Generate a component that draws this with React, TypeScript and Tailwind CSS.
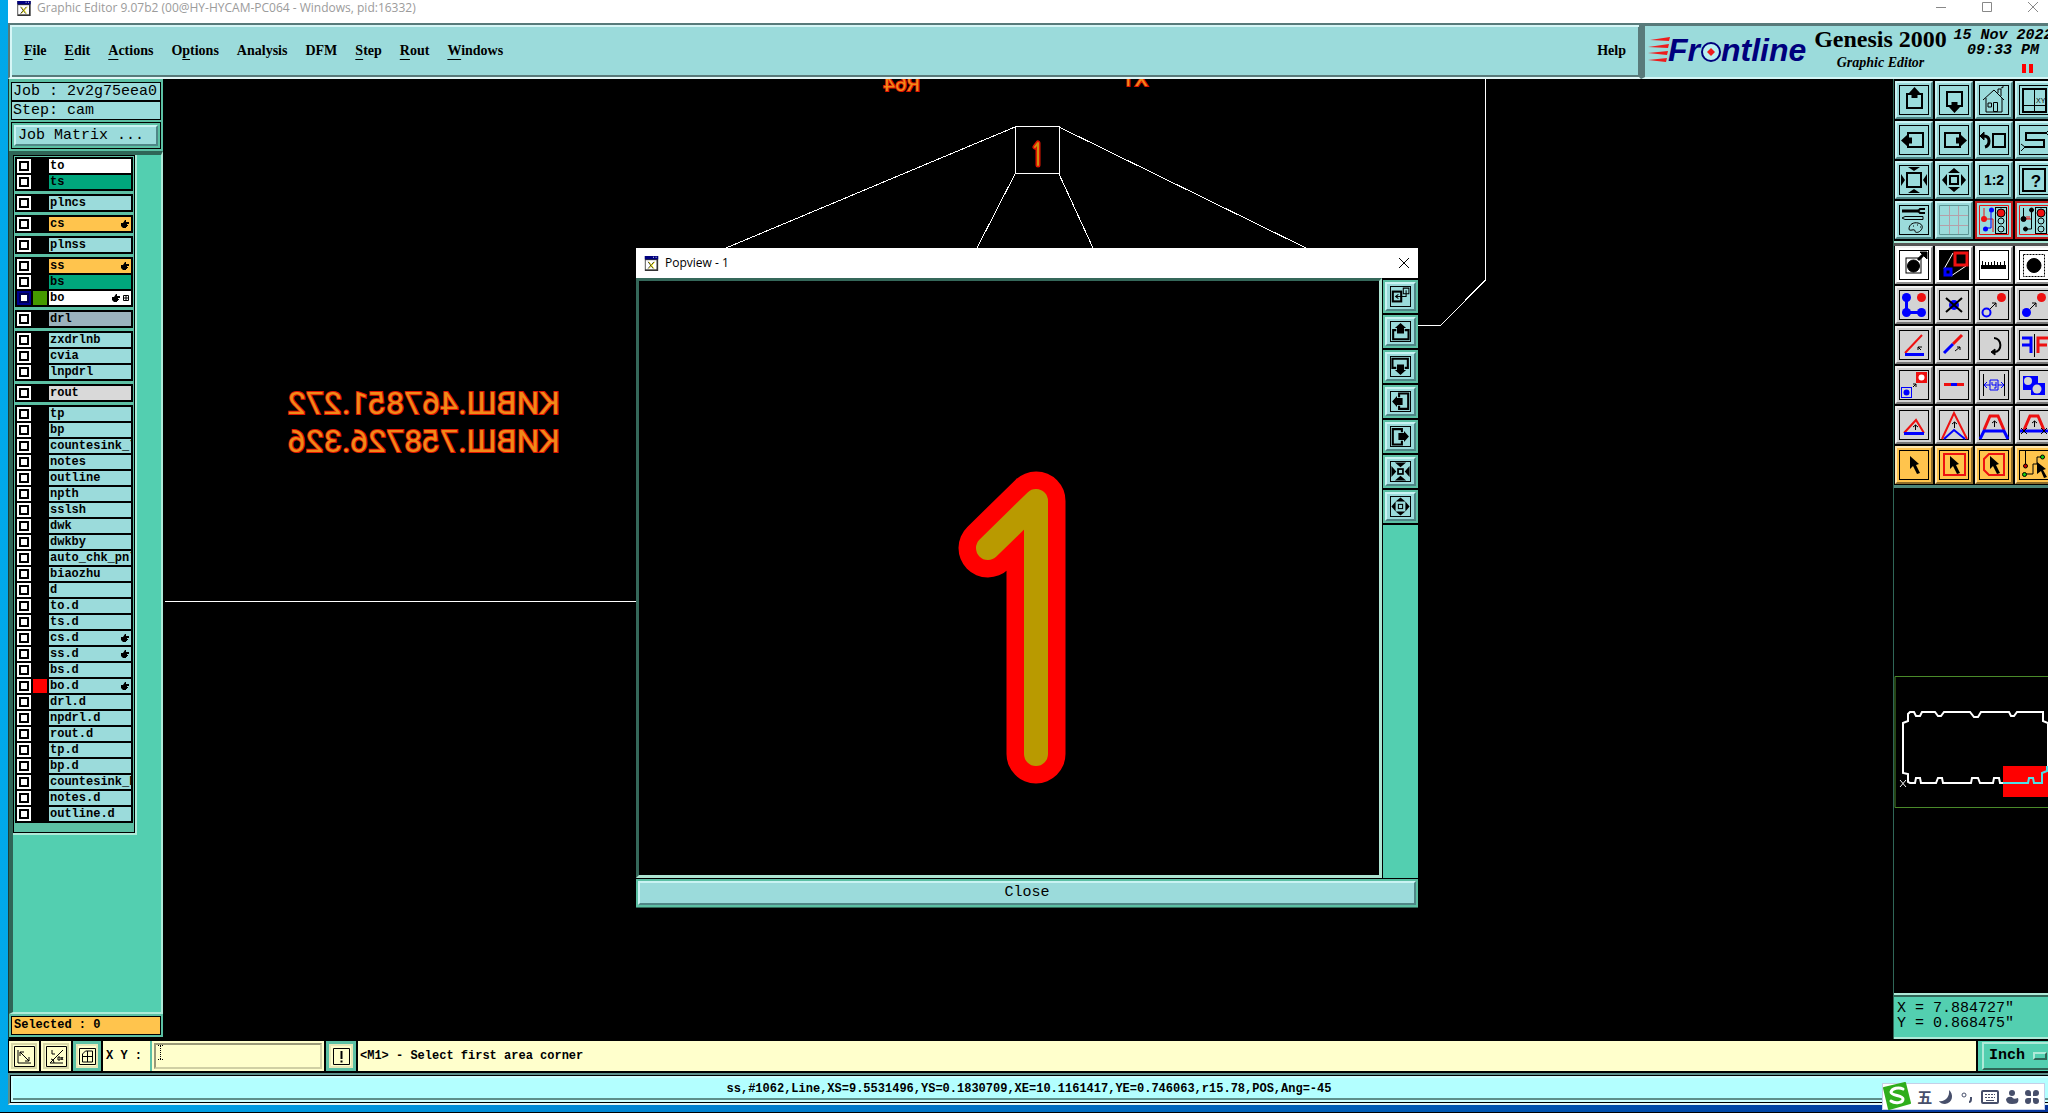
import type { ReactNode } from "react";

type Layer = {
  name: string;
  tone?: "white" | "green" | "orange" | "slate" | "gray";
  hand?: boolean;
  grid?: boolean;
  swatch?: "green" | "red";
  active?: boolean;
};

const layerGroups: Layer[][] = [
  [{ name: "to", tone: "white" }, { name: "ts", tone: "green" }],
  [{ name: "plncs" }],
  [{ name: "cs", tone: "orange", hand: true }],
  [{ name: "plnss" }],
  [
    { name: "ss", tone: "orange", hand: true },
    { name: "bs", tone: "green" },
    { name: "bo", tone: "white", hand: true, grid: true, swatch: "green", active: true },
  ],
  [{ name: "drl", tone: "slate" }],
  [{ name: "zxdrlnb" }, { name: "cvia" }, { name: "lnpdrl" }],
  [{ name: "rout", tone: "gray" }],
  [
    { name: "tp" },
    { name: "bp" },
    { name: "countesink_l" },
    { name: "notes" },
    { name: "outline" },
    { name: "npth" },
    { name: "sslsh" },
    { name: "dwk" },
    { name: "dwkby" },
    { name: "auto_chk_pnl" },
    { name: "biaozhu" },
    { name: "d" },
    { name: "to.d" },
    { name: "ts.d" },
    { name: "cs.d", hand: true },
    { name: "ss.d", hand: true },
    { name: "bs.d" },
    { name: "bo.d", hand: true, swatch: "red" },
    { name: "drl.d" },
    { name: "npdrl.d" },
    { name: "rout.d" },
    { name: "tp.d" },
    { name: "bp.d" },
    { name: "countesink_b" },
    { name: "notes.d" },
    { name: "outline.d" },
  ],
];

const layerTones = {
  white: "bg-white",
  green: "bg-[#00a67c]",
  orange: "bg-[#ffc44d]",
  slate: "bg-[#9bb3bd]",
  gray: "bg-[#d9d9d9]",
};

const swatches = { green: "bg-[#459a00]", red: "bg-[#ff0000]" };

// [before, mnemonic, after]
const menus: [string, string, string][] = [
  ["", "F", "ile"],
  ["", "E", "dit"],
  ["", "A", "ctions"],
  ["O", "p", "tions"],
  ["Analysis", "", ""],
  ["DFM", "", ""],
  ["", "S", "tep"],
  ["", "R", "out"],
  ["", "W", "indows"],
];

const serif = "font-['Liberation_Serif',serif]";
const mono = "font-['Liberation_Mono',monospace]";
const sans = "font-['Open_Sans',sans-serif]";

const bevels = {
  cyan: "bg-[#9bdbdb] border-t-[#c9f3f3] border-l-[#c9f3f3] border-r-[#4f8686] border-b-[#4f8686]",
  white: "bg-white border-t-[#f4f4f4] border-l-[#f4f4f4] border-r-[#8f8f8f] border-b-[#8f8f8f]",
  gray: "bg-[#d3d3d3] border-t-[#f0f0f0] border-l-[#f0f0f0] border-r-[#777777] border-b-[#777777]",
  orange: "bg-[#ffc44d] border-t-[#ffe7b0] border-l-[#ffe7b0] border-r-[#8d6c2a] border-b-[#8d6c2a]",
};

type Tone = keyof typeof bevels;
type Tool = { label: string; icon: ReactNode; tone?: Tone; frame?: "red" | "none" };

const blue = "#0000ff";
const red = "#ee1111";

const panUp = (
  <>
    <rect x="8" y="9" width="15" height="14" fill="none" strokeWidth="2" />
    <path d="M15.500 2 21 8h-2.500v5h-6V8H10z" fill="#000" stroke="none" />
  </>
);
const panDown = (
  <>
    <rect x="8" y="7" width="15" height="14" fill="none" strokeWidth="2" />
    <path d="M15.500 28 21 22h-2.500v-5h-6v5H10z" fill="#000" stroke="none" />
  </>
);
const panLeft = (
  <>
    <rect x="9" y="8" width="15" height="14" fill="none" strokeWidth="2" />
    <path d="M2 15.500 8 10v2.500h5v6H8V21z" fill="#000" stroke="none" />
  </>
);
const panRight = (
  <>
    <rect x="6" y="8" width="15" height="14" fill="none" strokeWidth="2" />
    <path d="M28 15.500 22 10v2.500h-5v6h5V21z" fill="#000" stroke="none" />
  </>
);

const viewTools: Tool[] = [
  { label: "Pan up", icon: panUp },
  { label: "Pan down", icon: panDown },
  {
    label: "Home",
    icon: (
      <>
        <path d="M4 15 15 5l10 10M7 13v14h16V13M19 8V4h3v7M22 3q3 0 2-2" fill="none" />
        <path d="M14.500 17.500h4v9h-4zM9 18h3.500v4H9z" fill="none" />
      </>
    ),
  },
  {
    label: "Zoom to point",
    icon: (
      <>
        <path d="M4 4h23v23H4z" fill="none" strokeWidth="2" />
        <path d="M15.500 4v23M4 20.500h23" />
        <text x="17" y="18" fontSize="7" fill="#000" stroke="none" fontFamily="Liberation Sans, sans-serif">
          XY
        </text>
      </>
    ),
  },
  { label: "Pan left", icon: panLeft },
  { label: "Pan right", icon: panRight },
  {
    label: "Previous view",
    icon: (
      <>
        <rect x="14" y="9" width="12" height="13" fill="none" strokeWidth="2" />
        <path d="M5 11q5 0 5 5t-4 6" fill="none" strokeWidth="3" />
        <path d="M1 11l4-4v8z" fill="#000" />
      </>
    ),
  },
  {
    label: "Serpentine",
    icon: (
      <>
        <path d="M28 8H7v7h18v7H6" fill="none" strokeWidth="2" />
        <path d="M2 19l4 3-4 4M30 5l-3 3 3 3" fill="none" />
      </>
    ),
  },
  {
    label: "Zoom in",
    icon: (
      <>
        <rect x="8" y="8" width="14" height="14" fill="none" strokeWidth="2" />
        <path d="M9 2h12l-6 4zM9 28h12l-6-4zM2 9v12l4-6zM28 9v12l-4-6z" fill="#000" stroke="none" />
      </>
    ),
  },
  {
    label: "Zoom out",
    icon: (
      <>
        <rect x="11" y="11" width="8" height="8" fill="none" strokeWidth="2" />
        <path d="M15 3l6 5H9zM15 27l6-5H9zM3 15l5-6v12zM27 15l-5-6v12z" fill="#000" stroke="none" />
      </>
    ),
  },
  {
    label: "Scale 1:2",
    icon: (
      <text
        x="15"
        y="20"
        textAnchor="middle"
        fontSize="14"
        fontWeight="bold"
        fill="#000"
        stroke="none"
        fontFamily="Liberation Sans, sans-serif"
      >
        1:2
      </text>
    ),
  },
  {
    label: "Help on area",
    icon: (
      <>
        <rect x="4" y="4" width="22" height="22" fill="none" strokeWidth="2" />
        <text
          x="17"
          y="22"
          textAnchor="middle"
          fontSize="17"
          fontWeight="bold"
          fill="#000"
          stroke="none"
          fontFamily="Liberation Sans, sans-serif"
        >
          ?
        </text>
      </>
    ),
  },
  {
    label: "Setup",
    icon: (
      <>
        <path d="M3 6h16" strokeWidth="3" />
        <path d="M26 4h-5l-2 2 2 2h5" fill="none" strokeWidth="2" />
        <path d="M3 13l3-1.500h18v3H6z" fill="none" />
        <path
          d="M10 24c0-5 5-7 9-6 5 1 5 5 3 7-2 3-6 3-6 1 0-3-6 1-6-2zM14 21h1M18 20h1M21 22h1"
          fill="none"
        />
      </>
    ),
  },
  {
    label: "Grid",
    frame: "none",
    icon: (
      <>
        <path d="M10.500 1v28M19.500 1v28M1 10.500h28M1 20.500h28" fill="none" stroke="#b5a0a8" />
        <path d="M.5 .5h29v29H.5z" fill="none" stroke="#5d9494" />
      </>
    ),
  },
  {
    label: "Online netlist",
    frame: "red",
    icon: (
      <>
        <path d="M5 3v11h9v13" fill="none" stroke={red} />
        <path d="M12 4v19H7" fill="none" stroke={blue} />
        <g stroke="none">
          <circle cx="5" cy="14" r="3" fill={red} />
          <circle cx="12.500" cy="5" r="2.500" fill={blue} />
          <circle cx="6.500" cy="24" r="2.500" fill={blue} />
        </g>
        <rect x="16.500" y="2.500" width="11" height="26" fill="none" />
        <circle cx="22" cy="8" r="4" fill={red} />
        <circle cx="22" cy="16" r="3" fill="none" />
        <circle cx="22" cy="24" r="3" fill="none" />
      </>
    ),
  },
  {
    label: "Online check",
    frame: "red",
    icon: (
      <>
        <path d="M4.500 3v11M12.500 5v19H7" fill="none" />
        <path d="M5 14h7M8 11v3M10 11v3" fill="none" stroke={red} />
        <circle cx="4.500" cy="14" r="2.500" fill="#000" />
        <circle cx="12.500" cy="5" r="2" fill="#000" />
        <circle cx="6.500" cy="24" r="2" fill="#000" />
        <rect x="16.500" y="2.500" width="11" height="26" fill="none" />
        <circle cx="22" cy="8" r="4" fill={red} />
        <circle cx="22" cy="16" r="3" fill="none" />
        <circle cx="22" cy="24" r="3" fill="none" />
      </>
    ),
  },
];

const cursor = <path d="M11 6l9 8-3 1 4 8-3 1-4-8-3 3z" fill="#000" stroke="none" />;
const smallArrow = <path d="M11 19l6-6M13 13h4v4" fill="none" />;

const editTools: Tool[] = [
  {
    label: "Reference pad",
    tone: "white",
    icon: (
      <>
        <rect x="7" y="8" width="15" height="15" fill="none" />
        <circle cx="14.500" cy="16" r="6" fill="#000" />
        <path d="M19 10l5-5" strokeWidth="3" />
        <path d="M21 2h7v7z" fill="#000" />
      </>
    ),
  },
  {
    label: "Area magnify",
    tone: "white",
    frame: "none",
    icon: (
      <>
        <path d="M0 0h30v30H0z" fill="#000" stroke="none" />
        <path d="M5 19L14 3M12 26l15-10" stroke="#fff" />
        <rect x="16" y="3" width="12" height="12" fill="none" stroke={red} strokeWidth="3" />
        <rect x="6" y="19" width="6" height="6" fill="none" stroke={blue} strokeWidth="3" />
      </>
    ),
  },
  {
    label: "Measure",
    tone: "white",
    icon: (
      <>
        <path d="M2 15h25v4H2z" fill="#000" stroke="none" />
        <path d="M3.500 11v5M6.500 12v4M9.500 12v4M12.500 12v4M15.500 11v5M18.500 12v4M21.500 12v4M25.500 11v5" />
      </>
    ),
  },
  {
    label: "Select feature",
    tone: "white",
    icon: (
      <>
        <rect x="4.500" y="4.500" width="21" height="22" fill="none" strokeDasharray="2 1" />
        <circle cx="15" cy="15.500" r="7" fill="#000" />
      </>
    ),
  },
  {
    label: "Add feature",
    tone: "gray",
    icon: (
      <>
        <path d="M7.500 8v14.500h15" fill="none" stroke={blue} strokeWidth="3" />
        <g stroke="none">
          <circle cx="7.500" cy="7.500" r="4.500" fill={blue} />
          <circle cx="7.500" cy="22.500" r="4.500" fill={blue} />
          <circle cx="22.500" cy="22.500" r="4.500" fill={blue} />
          <circle cx="22.500" cy="7.500" r="4.500" fill={red} />
        </g>
      </>
    ),
  },
  {
    label: "Delete feature",
    tone: "gray",
    icon: (
      <>
        <circle cx="15" cy="15" r="5" fill={blue} stroke="none" />
        <path d="M7 8l16 14M23 8L7 22" strokeWidth="2" />
      </>
    ),
  },
  {
    label: "Move feature",
    tone: "gray",
    icon: (
      <>
        <circle cx="7.500" cy="22.500" r="4" fill="none" stroke={blue} strokeWidth="2" />
        <circle cx="22.500" cy="7.500" r="4.500" fill={red} stroke="none" />
        {smallArrow}
      </>
    ),
  },
  {
    label: "Copy feature",
    tone: "gray",
    icon: (
      <>
        <circle cx="7.500" cy="22.500" r="4.500" fill={blue} stroke="none" />
        <circle cx="22.500" cy="7.500" r="4.500" fill={red} stroke="none" />
        {smallArrow}
      </>
    ),
  },
  {
    label: "Change angle",
    tone: "gray",
    icon: (
      <>
        <path d="M6 23L23 5" stroke={red} strokeWidth="2" />
        <path d="M6 24.500h19" stroke={blue} strokeWidth="3" />
        <path d="M22 20l-3-3M19 20v-3h4" fill="none" />
      </>
    ),
  },
  {
    label: "Stretch line",
    tone: "gray",
    icon: (
      <>
        <path d="M14 14l9-9" stroke={red} strokeWidth="3" />
        <path d="M5 23l9-9" stroke={blue} strokeWidth="3" />
        <path d="M16 21l5-4M18 17h3v3" fill="none" />
      </>
    ),
  },
  {
    label: "Rotate",
    tone: "gray",
    icon: (
      <>
        <path d="M15 8c8 0 9 14 0 14" fill="none" strokeWidth="2" />
        <path d="M12 22l4-3v6z" fill="#000" />
      </>
    ),
  },
  {
    label: "Mirror",
    tone: "gray",
    icon: (
      <>
        <path d="M3 8h9v15M3 15h9" fill="none" stroke={blue} strokeWidth="3" />
        <path d="M15.500 4v23" />
        <path d="M30 8H19v15M19 15h9" fill="none" stroke={red} strokeWidth="3" />
      </>
    ),
  },
  {
    label: "Resize pad",
    tone: "gray",
    icon: (
      <>
        <rect x="2.500" y="17.500" width="10" height="10" fill="none" stroke={blue} />
        <circle cx="7.500" cy="22.500" r="3" fill={blue} stroke="none" />
        <path d="M17 2h11v11H17z" fill={red} stroke="none" />
        <circle cx="22.500" cy="7.500" r="3" fill="#fff" stroke="none" />
        <path d="M14 17l3-3M14 14h3v3" fill="none" />
      </>
    ),
  },
  {
    label: "Break line",
    tone: "gray",
    icon: (
      <>
        <path d="M5 14.500h20" stroke={red} strokeWidth="3" />
        <path d="M12 14.500h6" stroke={blue} strokeWidth="3" />
      </>
    ),
  },
  {
    label: "Spacing",
    tone: "gray",
    icon: (
      <>
        <path d="M4.500 4v22M25.500 4v22" />
        <path
          d="M6 15h5M19 15h5M8 12l-3 3 3 3M22 12l3 3-3 3M11 10h8v10h-8zM13 12v3h4M17 12v6h-2"
          fill="none"
          stroke={blue}
        />
      </>
    ),
  },
  {
    label: "Merge",
    tone: "gray",
    icon: (
      <>
        <path d="M4 6h15v7h7v12H12v-5H4z" fill={blue} stroke="none" />
        <circle cx="9" cy="11" r="4" fill="#d3d3d3" stroke="none" />
        <circle cx="18" cy="19" r="4.500" fill="#d3d3d3" stroke="none" />
      </>
    ),
  },
  {
    label: "Stretch segment",
    tone: "gray",
    icon: (
      <>
        <path d="M5 23L17 10l8 13" fill="none" stroke={red} strokeWidth="2" />
        <path d="M5 23.500h20" stroke={blue} strokeWidth="3" />
        <path d="M16.500 20v-5M14 17l2.500-2 2.500 2" fill="none" />
      </>
    ),
  },
  {
    label: "Stretch corner",
    tone: "gray",
    icon: (
      <>
        <path d="M3 29L15 3l13 26" fill="none" stroke={red} strokeWidth="2" />
        <path d="M5 29l10-9 11 9" fill="none" stroke={blue} strokeWidth="2" />
        <path d="M15.500 18v-6M13 14l2.500-2 2.500 2" fill="none" />
      </>
    ),
  },
  {
    label: "Parallel move",
    tone: "gray",
    icon: (
      <>
        <path d="M5 20l6-14h8l6 14" fill="none" stroke={red} strokeWidth="3" />
        <path d="M1 29l4-8h20l4 8" fill="none" stroke={blue} strokeWidth="3" />
        <path d="M15.500 17v-6M13 13l2.500-2 2.500 2" fill="none" />
      </>
    ),
  },
  {
    label: "Parallel stretch",
    tone: "gray",
    icon: (
      <>
        <path d="M5 20l6-14h8l6 14" fill="none" stroke={red} strokeWidth="3" />
        <path d="M1 21h28" fill="none" stroke={blue} strokeWidth="3" />
        <path
          d="M15.500 17v-6M13 13l2.500-2 2.500 2M2 18l6 6M8 18l-6 6M22 18l6 6M28 18l-6 6"
          fill="none"
        />
      </>
    ),
  },
  { label: "Select", tone: "orange", icon: cursor },
  {
    label: "Select rectangle",
    tone: "orange",
    icon: (
      <>
        <rect x="5" y="4" width="21" height="21" fill="none" stroke={red} strokeWidth="2" />
        {cursor}
      </>
    ),
  },
  {
    label: "Select polygon",
    tone: "orange",
    icon: (
      <>
        <path d="M10 4h15v21H10l-5-5V9z" fill="none" stroke={red} strokeWidth="2" />
        {cursor}
      </>
    ),
  },
  {
    label: "Select net",
    tone: "orange",
    icon: (
      <>
        <path d="M6.500 1v14M6 24h8V14h4V7h6" fill="none" />
        <circle cx="6.500" cy="16" r="2" fill="#c00" />
        <circle cx="5.500" cy="24.500" r="2" fill="#1c1" />
        <circle cx="23.500" cy="7" r="2" fill="#1c1" />
        <path d="M18 12l9 7-3 1 4 7-3 1-3-7-4 3z" fill="#000" stroke="none" />
      </>
    ),
  },
];

const popPan = (
  <>
    <path d="M9 13H4.500v13h22V13H21" fill="none" strokeWidth="3" />
    <path d="M15 3l8 7h-3v8H10v-8H7z" fill="#000" stroke="none" />
  </>
);

const popTools: Tool[] = [
  {
    label: "Duplicate view",
    icon: (
      <>
        <rect x="4" y="8" width="12" height="14" fill="none" strokeWidth="3" />
        <path d="M19 3h8v8h-8zM8 15h15V6M12 12l-4 3 4 3" fill="none" strokeWidth="1.500" />
      </>
    ),
  },
  { label: "Pan up", icon: popPan },
  { label: "Pan down", icon: <g transform="rotate(180 15 15)">{popPan}</g> },
  { label: "Pan left", icon: <g transform="rotate(-90 15 15)">{popPan}</g> },
  { label: "Pan right", icon: <g transform="rotate(90 15 15)">{popPan}</g> },
  {
    label: "Zoom in",
    icon: (
      <>
        <rect x="11.500" y="11.500" width="7" height="7" fill="none" strokeWidth="2.500" />
        <path d="M7 2h16l-8 7zM7 28h16l-8-7zM2 7v16l7-8zM28 7v16l-7-8z" fill="#000" stroke="none" />
      </>
    ),
  },
  {
    label: "Zoom out",
    icon: (
      <>
        <rect x="12" y="12" width="6" height="6" fill="none" strokeWidth="1.500" />
        <path d="M15 2l7 6H8zM15 28l7-6H8zM2 15l6-7v14zM28 15l-6-7v14z" fill="#000" stroke="none" />
      </>
    ),
  },
];

const ToolButton = ({ label, icon, tone = "cyan", frame }: Tool) => (
  <button
    aria-label={label}
    className={`flex h-[38px] w-[38px] shrink-0 items-center justify-center border-2 ${
      frame === "red" ? "border-[#c11a1a] bg-[#9bdbdb]" : bevels[tone]
    }`}
  >
    <svg viewBox="0 0 30 30" className="size-[30px] shrink-0" stroke="#000">
      {!frame && <rect x=".5" y=".5" width="29" height="29" fill="none" />}
      {frame === "red" && <path d="M.5 .5h29v29H.5z" fill="none" stroke={red} />}
      {icon}
    </svg>
  </button>
);

const XIcon = ({ className }: { className: string }) => (
  <svg viewBox="0 0 16 18" className={className}>
    <path d="M0 0h16v18H0z" fill="#333" />
    <path d="M1 5h13v11H1z" fill="#fff" />
    <path d="M0 0h16v4H0z" fill="#000080" />
    <path d="M10 1h1v1h-1zM13 1h1v1h-1z" fill="#fff" />
    <path d="M4 7l6 8M11 7l-7 8" stroke="#000" />
    <path d="M5 7l6 8M12 7l-7 8" stroke="#e8e000" />
  </svg>
);

const Hand = () => (
  <svg viewBox="0 0 8 8" className="size-2">
    <path d="M0 3h2l2-3h1v2h3v2H6v1h1v1H6v1H5v1H2L0 6z" fill="#000" />
  </svg>
);

const TitleBar = () => (
  <header className="flex h-[23px] items-start bg-white pl-2">
    <div className={`flex flex-1 items-center gap-[5px] text-[12px] leading-[16px] text-[#9b9b9b] ${sans}`}>
      <XIcon className="h-[15px] w-[16px]" />
      Graphic Editor 9.07b2 (00@HY-HYCAM-PC064 - Windows, pid:16332)
    </div>
    <div className="flex gap-[34px] pt-[1px] pr-[9px]">
      <button aria-label="Minimize">
        <svg viewBox="0 0 12 12" className="size-3" stroke="#888">
          <path d="M1 6.500h10" />
        </svg>
      </button>
      <button aria-label="Maximize">
        <svg viewBox="0 0 12 12" className="size-3" stroke="#888" fill="none">
          <path d="M1.500 1.500h9v9h-9z" />
        </svg>
      </button>
      <button aria-label="Close window">
        <svg viewBox="0 0 12 12" className="size-3" stroke="#888">
          <path d="M1 1l10 10M11 1L1 11" />
        </svg>
      </button>
    </div>
  </header>
);

const Logo = () => (
  <svg viewBox="0 0 164 44" className="h-11 w-[164px] shrink-0" role="img" aria-label="Frontline">
    <path d="M2 14l20-3-1 4zM0 21l21-3-1 4zM0 27l20-2-1 4zM0 34l19-2-1 4z" fill="#ee1c1c" />
    <g fontFamily="Liberation Sans, sans-serif" fontSize="32" fontWeight="bold" fontStyle="italic" fill="#00007d">
      <text x="20" y="35">
        Fr
      </text>
      <text x="73" y="35">
        ntline
      </text>
    </g>
    <circle cx="63" cy="26" r="9" fill="#b9f0f0" stroke="#00007d" strokeWidth="2" />
    <path d="M63 22l4 4-4 4-4-4z" fill="#ee1c1c" />
  </svg>
);

const MenuBar = () => (
  <div className="flex h-14 bg-[#9bdbdb]">
    <nav
      className={`flex flex-1 items-center gap-[18px] border-2 border-[#587a7a] border-b-[#e2f7f7] pr-[13px] pb-[2px] pl-[14px] text-[14px] font-bold shadow-[inset_2px_2px_#d6f6f6,inset_-1px_-2px_#587a7a] ${serif}`}
    >
      {menus.map(([before, key, after]) => (
        <button key={before + key + after}>
          {before}
          <span className="underline underline-offset-4">{key}</span>
          {after}
        </button>
      ))}
      <button className="ml-auto">Help</button>
    </nav>
    <div className="flex w-[407px] shrink-0 overflow-hidden border-t-3 border-b-2 border-l-4 border-t-[#587a7a] border-b-[#d6f6f6] border-l-[#587a7a] pl-[3px]">
      <Logo />
      <div className={`flex w-[137px] shrink-0 flex-col items-center font-bold ${serif}`}>
        <span className="text-[24px] leading-[26px] whitespace-nowrap">Genesis 2000</span>
        <span className="text-[14px] leading-[22px] italic">Graphic Editor</span>
      </div>
      <div
        className={`ml-1 flex w-[100px] shrink-0 flex-col items-center pt-[2px] text-[15px] leading-[15px] font-bold italic ${mono}`}
      >
        <span className="whitespace-nowrap">15 Nov 2022</span>
        <span>09:33 PM</span>
        <span className="mt-[6px] flex gap-[3px] self-end pr-[20px]">
          <i className="h-[9px] w-1 bg-[#ff0000]" />
          <i className="h-[9px] w-1 bg-[#ff0000]" />
        </span>
      </div>
    </div>
  </div>
);

const LayerRow = ({ layer }: { layer: Layer }) => (
  <div className="flex h-[14px] gap-[2px]">
    <button
      aria-label={`Display ${layer.name}`}
      className={`flex w-[14px] items-center justify-center ${layer.active ? "bg-[#000090]" : "bg-white"}`}
    >
      <span className={`size-[10px] border-2 bg-white ${layer.active ? "border-[#000050]" : "border-black"}`} />
    </button>
    <span className={`w-[14px] ${layer.swatch ? swatches[layer.swatch] : "bg-black"}`} />
    <button
      className={`flex min-w-0 flex-1 items-center gap-[3px] overflow-hidden pr-[2px] pl-[1px] text-left ${
        layer.tone ? layerTones[layer.tone] : "bg-[#9bdbdb]"
      }`}
    >
      <span className="flex-1 leading-[14px]">{layer.name}</span>
      {layer.hand && <Hand />}
      {layer.grid && (
        <svg viewBox="0 0 6 6" className="size-[6px]" stroke="#000" fill="none">
          <path d="M.5 .5h5v5h-5zM3 0v6M0 3h6" />
        </svg>
      )}
    </button>
  </div>
);

const LayerPanel = () => (
  <aside className={`flex w-[155px] shrink-0 flex-col border-l border-l-[#1f3d36] bg-[#5cc0a4] ${mono}`}>
    <div className="px-[2px] pt-[3px] pb-[2px] text-[15px]">
      <div className="h-[19px] border border-black bg-[#9bdbdb] pl-[1px] leading-[17px] whitespace-nowrap">
        Job : 2v2g75eea0
      </div>
      <div className="h-[19px] border border-black bg-[#9bdbdb] pl-[1px] leading-[17px]">Step: cam</div>
      <div className="mt-[2px] border border-black p-[2px]">
        <button className={`block h-[21px] w-full border-2 pl-[2px] text-left leading-[17px] ${bevels.cyan}`}>
          Job Matrix ...
        </button>
      </div>
    </div>
    <div className="flex flex-1 flex-col items-start border-t-4 border-r-2 border-b-2 border-l-4 border-t-[#2f6657] border-r-[#aeead8] border-b-[#aeead8] border-l-[#2f6657] bg-[#53cfb0] text-[12px] font-bold">
      <div className="border-r-2 border-b-2 border-[#aeead8]">
        <div className="flex w-[122px] flex-col gap-[3px] border border-black bg-[#5cc0a4] px-[1px] pt-[1px] pb-[9px]">
          {layerGroups.map((group) => (
            <div key={group[0].name} className="flex flex-col gap-[2px] bg-black p-[2px]">
              {group.map((layer) => (
                <LayerRow key={layer.name} layer={layer} />
              ))}
            </div>
          ))}
        </div>
      </div>
    </div>
    <div className="border-b-2 border-black">
      <div className="mx-[2px] my-[2px] h-[19px] border border-black bg-[#ffc44d] pl-[2px] text-[12px] leading-[17px] font-bold">
        Selected : 0
      </div>
    </div>
  </aside>
);

const Popview = () => (
  <section
    aria-label="Popview - 1"
    className="absolute top-[169px] left-[473px] flex h-[660px] w-[782px] flex-col border-b border-[#2f6657] bg-black"
  >
    <header className={`flex h-[30px] items-center gap-[6px] bg-white pr-2 pl-2 text-[12px] ${sans}`}>
      <XIcon className="h-[15px] w-[15px]" />
      <span className="flex-1">Popview - 1</span>
      <button aria-label="Close popview">
        <svg viewBox="0 0 12 12" className="size-3" stroke="#000">
          <path d="M1 1l10 10M11 1L1 11" />
        </svg>
      </button>
    </header>
    <div className="flex flex-1 gap-[1px]">
      <div className="relative flex-1 border-[3px] border-t-[#35685a] border-r-[#aee5d3] border-b-[#aee5d3] border-l-[#35685a]">
        <svg className="absolute inset-0 size-full" fill="none" strokeLinecap="round" strokeLinejoin="round">
          <path d="M349 267L397 220V473" stroke="#ff0000" strokeWidth="59" />
          <path d="M349 267L397 220V473" stroke="#b99a00" strokeWidth="24" />
        </svg>
      </div>
      <div className="flex w-[35px] flex-col bg-[#53cfb0]">
        <div className="flex flex-col gap-[2px] bg-black pt-[2px] pb-[2px]">
          {popTools.map((tool) => (
            <div key={tool.label} className="border-2 border-[#5cc0a4] bg-[#5cc0a4]">
              <button
                aria-label={tool.label}
                className={`flex h-[29px] w-full items-center justify-center border-2 ${bevels.cyan}`}
              >
                <svg viewBox="0 0 30 30" className="size-[21px]" stroke="#000">
                  <rect x=".7" y=".7" width="28.600" height="28.600" fill="none" strokeWidth="1.400" />
                  {tool.icon}
                </svg>
              </button>
            </div>
          ))}
        </div>
      </div>
    </div>
    <div className="mt-[1px] border-2 border-[#5cc0a4]">
      <button className={`block h-6 w-full border-2 text-[15px] leading-[20px] ${bevels.cyan} ${mono}`}>Close</button>
    </div>
  </section>
);

const Canvas = () => (
  <main className="relative min-w-0 flex-1 overflow-hidden bg-black">
    <svg className="absolute inset-0 size-full" fill="none" shapeRendering="crispEdges" stroke="#fff">
      <path d="M852.500 47.500h44v47h-44zM852 48L563 169M852 95l-38 74M896 95l34 74M896 48l247 121" />
      <path d="M1322.500 0v201l-45 45.500h-30M2 522.500h480" />
    </svg>
    <svg
      className="absolute inset-0 size-full"
      fontFamily="Roboto, sans-serif"
      fontSize="32"
      fill="#f08a18"
      stroke="#e01400"
      strokeWidth="2"
      paintOrder="stroke"
    >
      <text transform="translate(397 335) scale(-1 1)">КИВШ.467851.272</text>
      <text transform="translate(397 373) scale(-1 1)">КИВШ.758726.326</text>
      <text transform="translate(757 12) scale(-1 1)" fontSize="21">
        R64
      </text>
      <text transform="translate(985 7) scale(-1 1)" fontSize="21">
        X1
      </text>
      <g fill="none" strokeLinecap="round" strokeLinejoin="round">
        <path d="M872 68l3-4v22" strokeWidth="5" />
        <path d="M872 68l3-4v22" stroke="#d09010" strokeWidth="2" />
      </g>
    </svg>
    <Popview />
  </main>
);

const MiniMap = () => (
  <svg className="block h-[132px] w-full" fill="none">
    <path d="M200 .5H1v131h199" stroke="#4a8a2a" />
    <path d="M109 90h46v31h-46z" fill="#ff0000" />
    <path
      d="M154 90V47l-5-2v-9h-26l-3 4h-3l-2-4H87l-3 5h-4l-4-5H50l-3 4h-3l-3-4H28l-2 4h-4l-2-4h-4l-2 2v7l-5 2v50l5 1v8l2 1h5l1-5h4l1 5h15l2-5h4l1 5h28l1-5h6l2 5h13l1-5h5l1 5h3"
      stroke="#fff"
      strokeWidth="2"
    />
    <path d="M109 107h25l1-5h4l1 5h8V97l5-2v-5" stroke="#4de0e8" strokeWidth="2" />
    <path d="M6 104l6 7M12 104l-6 7" stroke="#fff" />
  </svg>
);

const ToolPanel = () => (
  <aside className="flex w-[155px] shrink-0 flex-col border-l border-l-[#2f6657] bg-black">
    <div className="grid grid-cols-[repeat(4,38px)] gap-[2px] overflow-hidden border-b-2 border-b-[#aeead8] pt-[2px] pb-[2px] pl-[1px]">
      {viewTools.map((tool) => (
        <ToolButton key={tool.label} {...tool} />
      ))}
    </div>
    <div className="grid grid-cols-[repeat(4,38px)] gap-[2px] overflow-hidden border-t-3 border-b-3 border-t-[#555] border-b-[#4b8478] pb-[1px] pl-[1px]">
      {editTools.map((tool) => (
        <ToolButton key={tool.label} {...tool} />
      ))}
    </div>
    <div className="flex flex-1 flex-col justify-end pb-[185px]">
      <MiniMap />
    </div>
    <div
      className={`h-[46px] border-t-2 border-b-2 border-t-[#aeead8] border-b-[#aeead8] bg-[#53cfb0] pt-[6px] pl-[3px] text-[15px] leading-[15px] shadow-[inset_0_2px_#2f6657] ${mono}`}
    >
      <p>X = 7.884727"</p>
      <p>Y = 0.868475"</p>
    </div>
  </aside>
);

const modeIcons = [
  { label: "Snap off", path: "M6 6l9 9M6 6v4M6 6h4M15 15v-4M15 15h-4M4 4v13h13" },
  { label: "Angle mode", path: "M4 17L17 4M4 17h13M6 4v4h3M8 17q0-4-3-4M12 11h2v3h-2zM15 11l2 3M17 11l-2 3" },
];

const CommandBar = () => (
  <div className={`flex h-[34px] items-stretch gap-[2px] border-y-2 border-black bg-black pl-[1px] text-[12px] font-bold ${mono}`}>
    {modeIcons.map((mode) => (
      <button
        key={mode.label}
        aria-label={mode.label}
        className="flex w-[30px] items-center justify-center bg-[#ffffcc] shadow-[inset_0_0_0_2px_#ffffcc,inset_0_0_0_4px_#d8d8a8]"
      >
        <svg viewBox="0 0 21 21" className="size-[21px]" fill="none" stroke="#000">
          <path d="M.5 .5h20v20H.5z" />
          <path d={mode.path} />
        </svg>
      </button>
    ))}
    <button
      aria-label="Grid snap"
      className="flex w-7 items-center justify-center bg-[#ffffcc] shadow-[inset_0_0_0_3px_#5cc0a4,inset_0_0_0_5px_#e8e8b8]"
    >
      <svg viewBox="0 0 17 17" className="size-[17px]" fill="none" stroke="#000">
        <path d="M.5 .5h16v16H.5zM3.500 6l3-3h7v11h-10zM8.500 3v11M3 8.500h11" />
      </svg>
    </button>
    <div className="flex items-center bg-[#ffffcc]">
      <label htmlFor="xy" className="w-[47px] pl-[3px]">
        X Y :
      </label>
      <div className="relative h-full border-l-2 border-[#5cc0a4] p-[2px]">
        <input
          id="xy"
          className="block h-full w-[168px] border-2 border-t-[#9a9a78] border-r-[#d0d0a4] border-b-[#d0d0a4] border-l-[#9a9a78] bg-[#ffffcc] px-1 outline-none"
        />
        <svg viewBox="0 0 5 15" className="absolute top-1 left-[6px] h-[15px] w-[5px]" stroke="#000">
          <path d="M0 .5h5M0 14.500h5M2.500 1v13" strokeDasharray="1 1" />
        </svg>
      </div>
    </div>
    <button
      aria-label="Alerts"
      className="flex w-[30px] items-center justify-center bg-[#ffffcc] shadow-[inset_0_0_0_3px_#5cc0a4,inset_0_0_0_5px_#e8e8b8]"
    >
      <svg viewBox="0 0 17 17" className="size-[17px]" fill="none" stroke="#000">
        <path d="M.5 .5h16v16H.5z" />
        <path d="M8.500 3v8M8.500 12.500v2" strokeWidth="2" />
      </svg>
    </button>
    <p className="flex flex-1 items-center bg-[#ffffcc] pl-[2px]">&lt;M1&gt; - Select first area corner</p>
    <div className="flex w-[70px] shrink-0 overflow-hidden bg-[#53cfb0] py-[1px] pl-1">
      <button className="flex w-[80px] shrink-0 items-center gap-2 border-2 border-t-[#aeead8] border-b-[#2f6657] border-l-[#aeead8] pl-[5px] text-[15px]">
        Inch
        <span className="h-2 w-[14px] border-2 border-t-[#aeead8] border-r-[#2f6657] border-b-[#2f6657] border-l-[#aeead8]" />
      </button>
    </div>
  </div>
);

const StatusBar = () => (
  <footer
    className={`flex h-8 items-center justify-center border-2 border-r-0 border-t-[#5d8f8a] border-b-[#e2f7f7] border-l-[#5d8f8a] bg-[#b3ffff] text-[12px] font-bold shadow-[inset_1px_1px_#000,inset_0_-1px_#000,inset_3px_3px_#ccffff,inset_0_-3px_#ccffff,inset_0_-5px_#5d8f8a] ${mono}`}
  >
    ss,#1062,Line,XS=9.5531496,YS=0.1830709,XE=10.1161417,YE=0.746063,r15.78,POS,Ang=-45
  </footer>
);

const InputMethodBar = () => (
  <div className="absolute right-[3px] bottom-[2px] flex h-[27px] w-[163px] items-center justify-between border border-[#c5cfe8] bg-white pr-[5px] text-[#474f6b]">
    <svg viewBox="0 0 28 28" className="-mt-[5px] -mb-1 size-7 shrink-0">
      <path d="M1 6L22 1l5 20L6 27z" fill="#2fae1c" stroke="#2fae1c" strokeWidth="2" strokeLinejoin="round" />
      <path
        d="M20 7c-4-2-11-1-12 3 0 4 12 3 12 7 0 4-8 5-12 2"
        fill="none"
        stroke="#fff"
        strokeWidth="3"
        strokeLinecap="round"
      />
    </svg>
    <span className="font-['Noto_Sans_CJK_SC',sans-serif] text-[15px] leading-[20px] font-bold">五</span>
    <svg viewBox="0 0 16 16" className="size-4" fill="currentColor">
      <path d="M11 1c5 4 4 13-4 14-3 0-5-1-6-3 6 1 11-4 10-11z" />
    </svg>
    <svg viewBox="0 0 14 14" className="size-[14px]" fill="none" stroke="currentColor" strokeWidth="2">
      <circle cx="4" cy="5" r="2" strokeWidth="1" />
      <path d="M11 7v2q0 3-2 3" />
    </svg>
    <svg viewBox="0 0 18 14" className="h-[14px] w-[18px]" fill="none" stroke="currentColor">
      <rect x="1" y="1" width="16" height="12" rx="1" strokeWidth="2" />
      <path d="M4 4.500h10M4 7.500h10" strokeDasharray="2 1" strokeWidth="1" />
      <path d="M5 10.500h8" />
    </svg>
    <svg viewBox="0 0 14 16" className="h-4 w-[14px]" fill="currentColor">
      <circle cx="7" cy="4" r="3" />
      <path d="M1 10q2-3 6-2 1 3 6 1 2 6-6 6-6 0-6-5z" />
    </svg>
    <svg viewBox="0 0 14 14" className="size-[14px]" fill="currentColor">
      <path d="M3 0q3 0 3 3v3H3q-3 0-3-3t3-3zM11 0q3 0 3 3t-3 3H8V3q0-3 3-3zM3 8h3v3q0 3-3 3t-3-3 3-3zM8 8h3q3 0 3 3t-3 3-3-3z" />
    </svg>
  </div>
);

const App = () => (
  <div className="relative flex min-h-screen flex-col overflow-hidden border-b border-black bg-linear-to-r from-[#00a8ea] to-[#06349a] pb-[7px] pl-2 text-black">
    <TitleBar />
    <MenuBar />
    <div className="flex flex-1">
      <LayerPanel />
      <Canvas />
      <ToolPanel />
    </div>
    <CommandBar />
    <StatusBar />
    <InputMethodBar />
  </div>
);

export default App;
